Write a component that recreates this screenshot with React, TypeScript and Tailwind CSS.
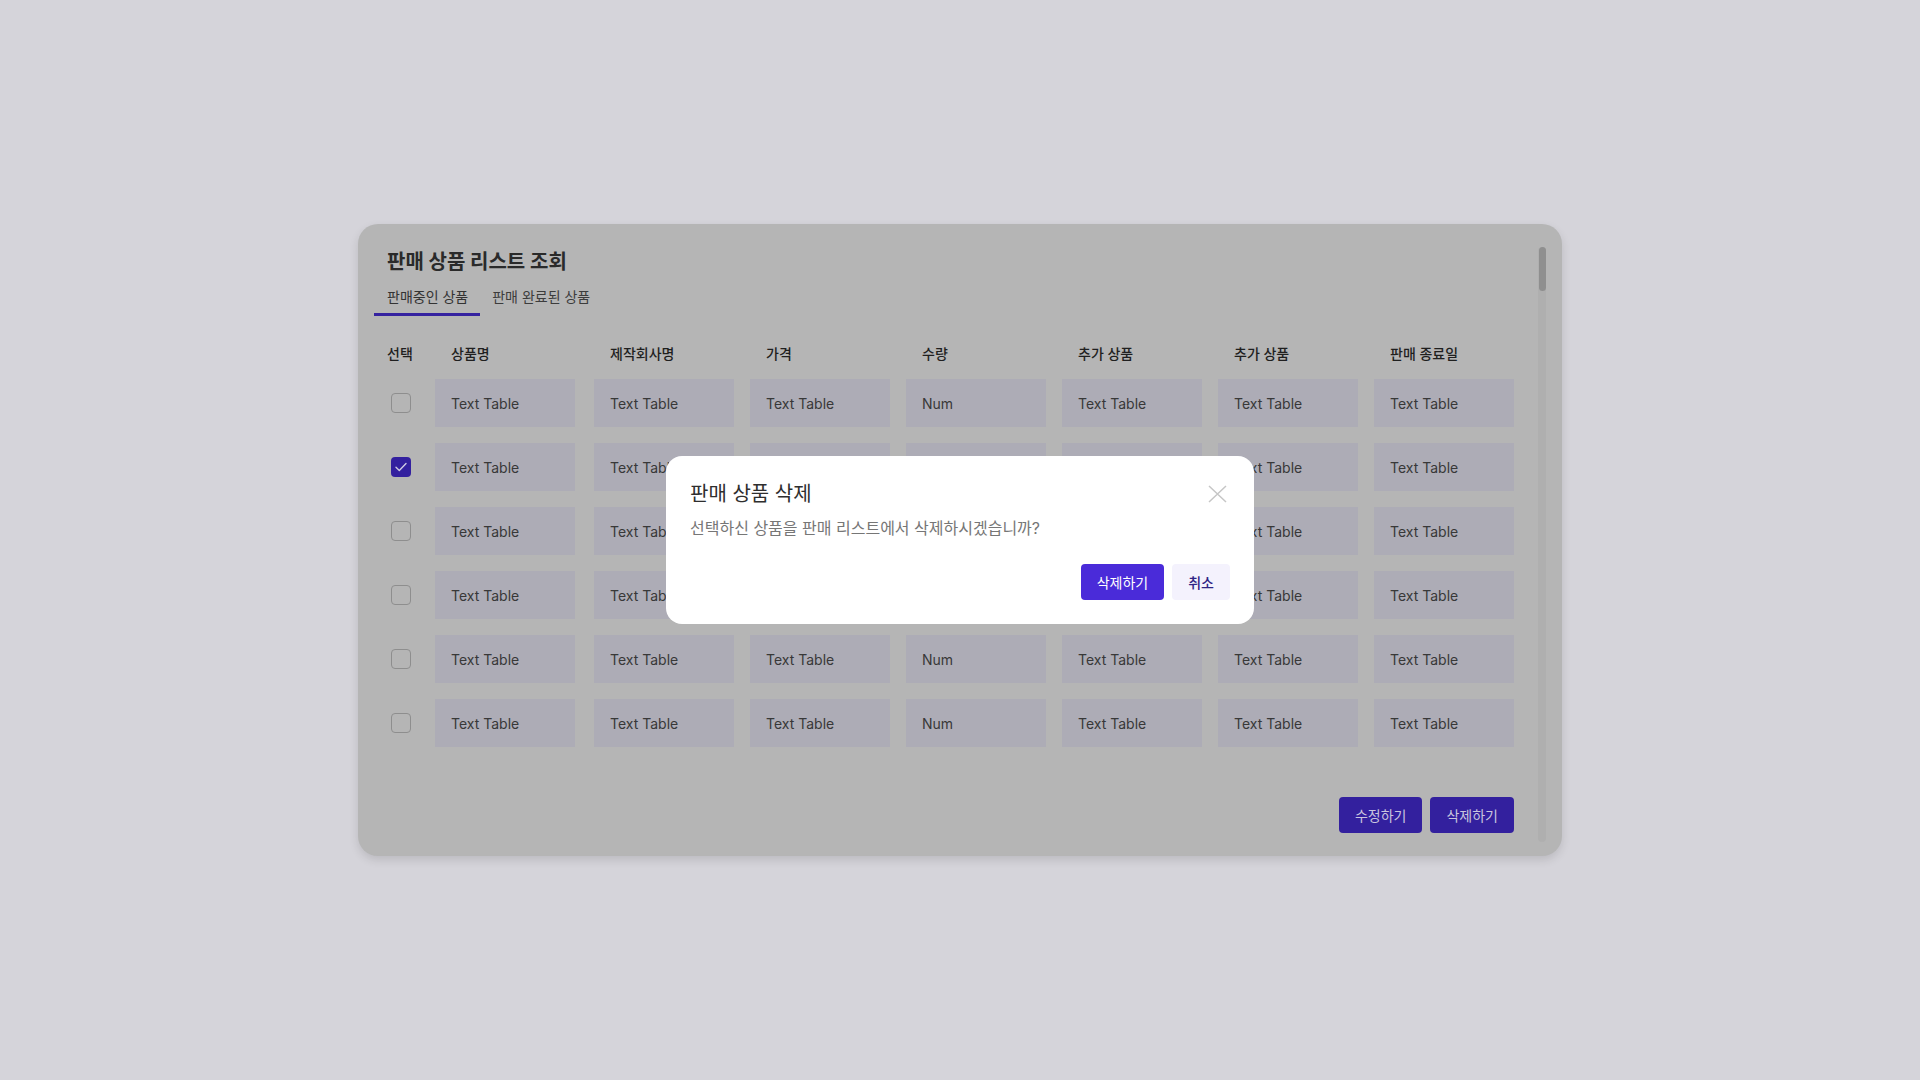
import { useState } from 'react';

const headers = ['상품명', '제작회사명', '가격', '수량', '추가 상품', '추가 상품', '판매 종료일'];
const rowValues = ['Text Table', 'Text Table', 'Text Table', 'Num', 'Text Table', 'Text Table', 'Text Table'];
// gap before each data column (first one sits right after the checkbox column)
const colGap = ['', 'ml-[19px]', 'ml-4', 'ml-4', 'ml-4', 'ml-4', 'ml-4'];

function Checkbox({ checked }: { checked: boolean }) {
  if (checked) {
    return (
      <div className="w-5 h-5 rounded-[4px] bg-[#33209f] flex items-center justify-center">
        <svg width="12" height="10" viewBox="0 0 12 10" fill="none">
          <path d="M1 5.2 L4.3 8.4 L11 1.4" stroke="#cfcbe4" strokeWidth="1.4" strokeLinecap="round" strokeLinejoin="round" />
        </svg>
      </div>
    );
  }
  return <div className="w-5 h-5 rounded-[4px] border border-[#8e8e8e]" />;
}

function DeleteModal() {
  return (
    <div className="fixed inset-0 flex items-center justify-center">
      <div className="w-[588px] bg-white rounded-2xl p-6">
        <div className="flex items-start justify-between">
          <h2 className="text-[20px] leading-7 text-[#2e2e2e]">판매 상품 삭제</h2>
          <button className="mt-1 mr-[3px] w-[19px] h-[19px] flex items-center justify-center">
            <svg width="19" height="18" viewBox="0 0 19 18" fill="none">
              <path d="M1 1 L18 17 M18 1 L1 17" stroke="#c6c6c6" strokeWidth="1.5" />
            </svg>
          </button>
        </div>
        <p className="mt-2 text-[16px] leading-6 text-[#767676]">
          선택하신 상품을 판매 리스트에서 삭제하시겠습니까?
        </p>
        <div className="mt-6 flex justify-end gap-2">
          <button className="h-9 px-4 rounded-[4px] bg-[#4a2bd9] text-white text-[14px]">삭제하기</button>
          <button className="h-9 px-4 rounded-[4px] bg-[#f4f2fd] text-[#2f2484] text-[14px] font-medium">취소</button>
        </div>
      </div>
    </div>
  );
}

export default function App() {
  const [checked] = useState([false, true, false, false, false, false]);
  const [tab] = useState(0);

  return (
    <div className="min-h-screen w-full bg-[#d5d4da] flex items-center justify-center font-[Inter,'Noto_Sans_CJK_KR',sans-serif]">
      <div className="w-[1204px] bg-[#b5b5b5] rounded-[20px] shadow-[0_4px_10px_rgba(0,0,0,0.12)] flex">
        <div className="flex-1 pl-4 pr-6 pt-6 pb-[23px] flex flex-col">
          <h1 className="pl-[13px] text-[20px] leading-7 font-bold text-[#2a2a2a]">판매 상품 리스트 조회</h1>

          <div className="mt-[11px] flex">
            {['판매중인 상품', '판매 완료된 상품'].map((t, i) => (
              <div
                key={t}
                className={
                  i === tab
                    ? 'pl-[13px] pr-3 pb-[6px] border-b-[3px] border-[#3522a0] text-[14px] leading-5 text-[#333]'
                    : 'px-3 pb-[6px] border-b-[3px] border-transparent text-[14px] leading-5 text-[#3c3c3c]'
                }
              >
                {t}
              </div>
            ))}
          </div>

          <div className="mt-[28px] flex text-[14px] leading-5 font-medium text-[#1f1f1f]">
            <div className="w-[61px] pl-[13px]">선택</div>
            {headers.map((h, i) => (
              <div key={i} className={`w-[140px] px-4 ${colGap[i]}`}>{h}</div>
            ))}
          </div>

          <div className="mt-[15px] flex flex-col gap-4">
            {checked.map((c, r) => (
              <div key={r} className="flex items-center">
                <div className="w-[61px] pl-[17px]">
                  <Checkbox checked={c} />
                </div>
                {rowValues.map((v, i) => (
                  <div key={i} className={`w-[140px] h-12 px-4 flex items-center bg-[#adacb6] text-[14px] text-[#383838] ${colGap[i]}`}>
                    {v}
                  </div>
                ))}
              </div>
            ))}
          </div>

          <div className="mt-[50px] flex justify-end gap-2">
            <button className="h-9 px-4 rounded-[4px] bg-[#33209e] text-[#c9c5de] text-[14px]">수정하기</button>
            <button className="h-9 px-4 rounded-[4px] bg-[#33209e] text-[#c9c5de] text-[14px]">삭제하기</button>
          </div>
        </div>

        <div className="pt-[23px] pb-[14px] pr-4 flex">
          <div className="w-2 rounded-full bg-[#afafaf] flex justify-center">
            <div className="w-[7px] h-[44px] rounded-full bg-[#8f8f8f]" />
          </div>
        </div>
      </div>

      <DeleteModal />
    </div>
  );
}
